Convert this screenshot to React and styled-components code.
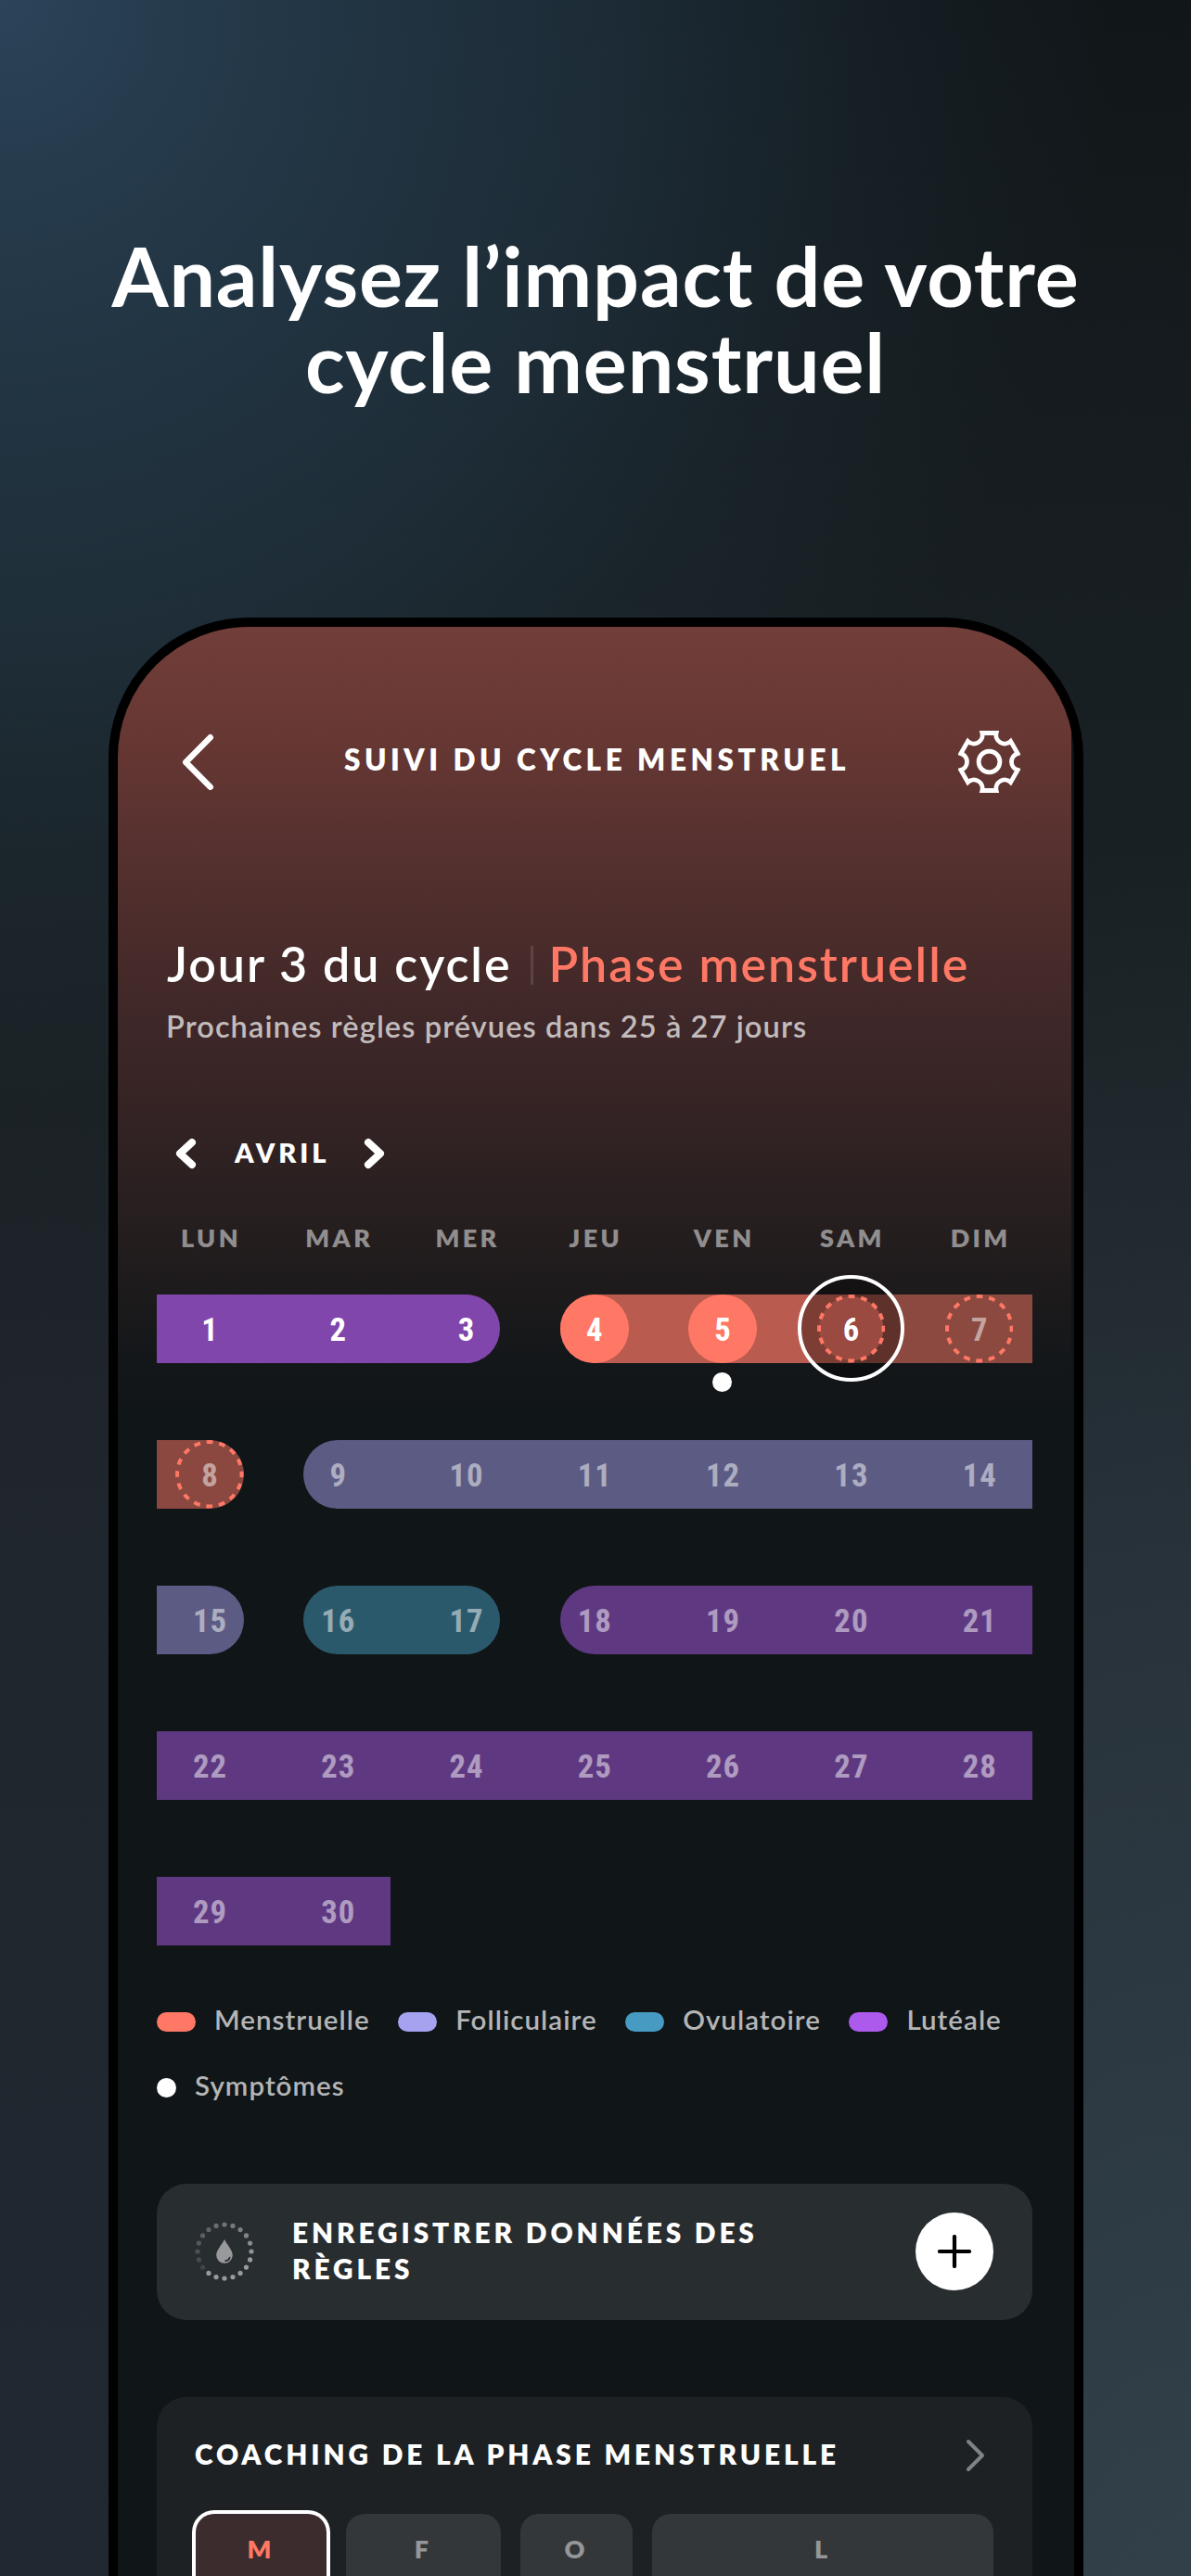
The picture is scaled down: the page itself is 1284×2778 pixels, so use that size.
import React from 'react';
import styled, { createGlobalStyle } from 'styled-components';

const GlobalStyle = createGlobalStyle`
  * {
    box-sizing: border-box;
  }
  body {
    margin: 0;
    background: #14191c;
    color: #fff;
    font-family: Lato, 'Open Sans', sans-serif;
  }
`;

const Page = styled.main`
  width: 1284px;
  height: 2778px;
  padding-top: 251px;
  overflow: hidden;
  background:
    radial-gradient(circle at 0 0, rgba(43, 68, 89, 1) 0, rgba(40, 64, 83, 0.8) 280px, rgba(36, 58, 74, 0.58) 660px, rgba(30, 48, 60, 0.32) 930px, rgba(24, 34, 38, 0) 1200px),
    radial-gradient(1100px 2000px at 100% 105%, #32424b 0, rgba(50, 66, 75, 0.55) 50%, rgba(50, 66, 75, 0) 100%),
    linear-gradient(180deg, #111619 0, #181f22 25%, #1b2226 42%, #20262d 60%, #222831 100%);
`;

const Headline = styled.h1`
  margin: 0 0 229px;
  font-size: 88px;
  font-weight: 700;
  line-height: 93px;
  letter-spacing: 0.85px;
  text-align: center;
  white-space: pre-line;
`;

const Phone = styled.section`
  width: 1051px;
  height: 2300px;
  margin-left: 117px;
  border: 10px solid #000;
  border-radius: 151px 151px 0 0;
  overflow: hidden;
  background:
    linear-gradient(180deg, #723e39 0, #663733 124px, #583230 224px, #482b2a 350px, #3e2728 430px, #372425 504px, #281f20 624px, #1c1a1b 724px, #14171a 790px, #101518 850px) no-repeat 0 0 / 1028px 850px,
    #101518;
`;

const Header = styled.header`
  display: flex;
  align-items: center;
  height: 67px;
  margin: 112px 58px 0 67px;
`;

const BackButton = styled.div`
  display: flex;
  width: 60px;
  padding-left: 3px;
`;

const HeaderTitle = styled.h2`
  flex: 1;
  margin: 0;
  padding-bottom: 5px;
  font-size: 31.5px;
  font-weight: 800;
  line-height: 40px;
  letter-spacing: 4.55px;
  text-align: center;
`;

const Status = styled.div`
  display: flex;
  height: 60px;
  margin: 154px 0 0 53px;
  font-size: 52px;
  font-weight: 600;
  line-height: 60px;
  letter-spacing: 1.95px;
  white-space: nowrap;
`;

const Separator = styled.div`
  width: 3px;
  height: 42px;
  margin: 11px 17px 0 20px;
  background: rgba(255, 255, 255, 0.12);
`;

const Phase = styled.span`
  color: #ff7865;
`;

const Forecast = styled.p`
  margin: 18px 0 0 52px;
  font-size: 32.6px;
  font-weight: 600;
  line-height: 40px;
  letter-spacing: 1.08px;
  color: rgba(255, 255, 255, 0.7);
`;

const MonthNav = styled.div`
  display: flex;
  align-items: center;
  gap: 42px;
  height: 40px;
  margin: 97px 0 0 63px;
`;

const Month = styled.span`
  margin-right: -4px;
  padding-bottom: 4px;
  font-size: 29px;
  font-weight: 800;
  letter-spacing: 3.9px;
`;

const Content = styled.div`
  width: 944px;
  margin-left: 42px;
`;

const Weekdays = styled.div`
  display: flex;
  gap: 64.7px;
  height: 34px;
  margin-top: 54px;
  padding: 0 20.2px;
`;

const Weekday = styled.span`
  display: flex;
  justify-content: center;
  width: 73.6px;
  padding-left: 3px;
  font-size: 27px;
  font-weight: 800;
  line-height: 34px;
  letter-spacing: 3.4px;
  color: rgba(255, 255, 255, 0.5);
`;

const Weeks = styled.div`
  display: grid;
  row-gap: 83.5px;
  margin-top: 44px;
`;

const Week = styled.div`
  display: flex;
  gap: 64.7px;
  height: 73.5px;
`;

const Segment = styled.div`
  display: flex;
  gap: 64.7px;
  padding: 0 ${(p) => (p.$roundRight ? 0 : 20.2)}px 0 ${(p) => (p.$roundLeft ? 0 : 20.2)}px;
  border-radius: ${(p) => {
    const l = p.$roundLeft ? '37px' : '0';
    const r = p.$roundRight ? '37px' : '0';
    return `${l} ${r} ${r} ${l}`;
  }};
  background: ${(p) => p.$fill};
`;

const Day = styled.div`
  position: relative;
  display: flex;
  align-items: center;
  justify-content: center;
  width: 73.6px;
  height: 73.5px;
  border-radius: 50%;
  background: ${(p) => (p.$logged ? '#ff7865' : 'transparent')};
`;

const DayNumber = styled.span`
  position: relative;
  padding: 2px 0 0 1px;
  font-family: Roboto, sans-serif;
  font-size: 34.7px;
  font-weight: 700;
  font-stretch: 75%;
  letter-spacing: 1px;
  color: ${(p) => (p.$past ? '#fff' : 'rgba(255, 255, 255, 0.5)')};
`;

const TodayRing = styled.div`
  position: absolute;
  top: -21px;
  left: -21px;
  width: 115px;
  height: 115px;
  border: 4px solid #fff;
  border-radius: 50%;
  background: rgba(0, 0, 0, 0.33);
`;

const PredictedRing = styled.svg`
  position: absolute;
  inset: 0;
`;

const SymptomDot = styled.span`
  position: absolute;
  top: 84px;
  left: 26px;
  width: 21px;
  height: 21px;
  border-radius: 50%;
  background: #fff;
`;

const Legend = styled.div`
  display: flex;
  flex-wrap: wrap;
  gap: 31px 30.5px;
  margin-top: 62.5px;
`;

const LegendItem = styled.div`
  display: flex;
  align-items: center;
  gap: 20px;
  height: 40px;
`;

const Swatch = styled.span`
  width: ${(p) => (p.$dot ? 21 : 42)}px;
  height: 21px;
  border-radius: 11px;
  background: ${(p) => p.$color};
`;

const LegendLabel = styled.span`
  padding-bottom: 4px;
  font-size: 29.5px;
  font-weight: 600;
  line-height: 36px;
  letter-spacing: 1.05px;
  color: rgba(255, 255, 255, 0.7);
`;

const LogCard = styled.div`
  display: flex;
  align-items: center;
  height: 146.5px;
  margin-top: 84px;
  padding: 0 42px 0 41px;
  border-radius: 32px;
  background: #282d30;
`;

const CardTitle = styled.h3`
  margin: 0;
  font-size: 29.8px;
  font-weight: 800;
  line-height: 39.5px;
  letter-spacing: 3.9px;
`;

const LogTitle = styled(CardTitle)`
  flex: 1;
  padding: 0 130px 2px 41px;
`;

const AddButton = styled.div`
  display: flex;
  align-items: center;
  justify-content: center;
  width: 84px;
  height: 84px;
  border-radius: 50%;
  background: #fff;
`;

const CoachingCard = styled.div`
  height: 300px;
  margin-top: 83.5px;
  padding-top: 43px;
  border-radius: 32px;
  background: #1d2124;
`;

const CoachingHeader = styled.div`
  display: flex;
  align-items: center;
  justify-content: space-between;
  height: 40px;
  padding: 0 52px 0 41px;

  ${CardTitle} {
    padding-bottom: 3px;
  }
`;

const PhaseTabs = styled.div`
  display: grid;
  grid-template-columns: 141px 167px 121px 368px;
  gap: 21px;
  margin: 42.5px 0 0 42px;
`;

const PhaseTab = styled.div`
  height: 150px;
  padding: 20px 4px 0 0;
  border-radius: 20px;
  font-size: 27px;
  font-weight: 800;
  line-height: 36px;
  text-align: center;
  color: ${(p) => (p.$active ? '#ff7865' : '#949698')};
  background: ${(p) => (p.$active ? '#3d2c2d' : '#34373a')};
  box-shadow: ${(p) => (p.$active ? '0 0 0 4px #fff' : 'none')};
`;

const Chevron = ({ w, h, stroke, color = '#fff', right = false }) => {
  const s = stroke / 2;
  const d = right
    ? `M${s} ${s}L${w - s} ${h / 2}L${s} ${h - s}`
    : `M${w - s} ${s}L${s} ${h / 2}L${w - s} ${h - s}`;
  return (
    <svg width={w} height={h} viewBox={`0 0 ${w} ${h}`} fill="none" overflow="visible">
      <path d={d} stroke={color} strokeWidth={stroke} strokeLinecap="round" strokeLinejoin="round" />
    </svg>
  );
};

const rotate = (x, y, deg) => {
  const a = (deg * Math.PI) / 180;
  return `${(x * Math.cos(a) - y * Math.sin(a)).toFixed(2)} ${(x * Math.sin(a) + y * Math.cos(a)).toFixed(2)}`;
};

// six flat teeth joined by concave arcs
const gearPath = [0, 60, 120, 180, 240, 300]
  .map((deg, i) => `${i ? 'A9.3 9.3 0 0 0' : 'M'} ${rotate(-7.6, -31, deg)} L${rotate(7.6, -31, deg)}`)
  .join(' ') + ` A9.3 9.3 0 0 0 ${rotate(-7.6, -31, 0)} Z`;

const GearIcon = () => (
  <svg width="67" height="67" viewBox="-33.5 -33.5 67 67" fill="none" stroke="#fff" strokeWidth="4.8">
    <path d={gearPath} />
    <circle r="11.4" />
  </svg>
);

const dots = Array.from({ length: 20 }, (_, i) => ({
  angle: ((216 - i * 18) * Math.PI) / 180,
  opacity: i < 7 ? 0.52 : 0.52 - (i - 6) * 0.031,
}));

const DropIcon = () => (
  <svg width="64" height="64" viewBox="-32 -32 64 64">
    {dots.map((d) => (
      <circle
        key={d.angle}
        cx={29 * Math.sin(d.angle)}
        cy={-29 * Math.cos(d.angle)}
        r="2.6"
        fill="#fff"
        opacity={d.opacity}
      />
    ))}
    <path d="M0 -13C2.6 -7.5 8.8 -1.5 8.8 4A8.8 8.8 0 0 1 -8.8 4C-8.8 -1.5 -2.6 -7.5 0 -13Z" fill="#97999b" />
    <path d="M1.2 10.2Q5 9.6 5.6 6.6" stroke="#282d30" strokeWidth="1.8" strokeLinecap="round" fill="none" />
  </svg>
);

const PlusIcon = () => (
  <svg width="36" height="36" viewBox="0 0 36 36" stroke="#000" strokeWidth="4.2" strokeLinecap="round">
    <path d="M18 2v32M2 18h32" />
  </svg>
);

const weekdays = ['LUN', 'MAR', 'MER', 'JEU', 'VEN', 'SAM', 'DIM'];

const MENSTRUAL = '#8a4840';
const FOLLICULAR = '#5c5b83';
const OVULATORY = '#2b596c';
const LUTEAL = '#5f3882';
const TODAY = 6;

const weeks = [
  [
    { from: 1, to: 3, fill: '#8146ab', right: true },
    { from: 4, to: 7, fill: 'linear-gradient(90deg, #ba5b4f 313px, #8c4940 313px)', left: true },
  ],
  [
    { from: 8, to: 8, fill: MENSTRUAL, right: true },
    { from: 9, to: 14, fill: FOLLICULAR, left: true },
  ],
  [
    { from: 15, to: 15, fill: FOLLICULAR, right: true },
    { from: 16, to: 17, fill: OVULATORY, left: true, right: true },
    { from: 18, to: 21, fill: LUTEAL, left: true },
  ],
  [{ from: 22, to: 28, fill: LUTEAL }],
  [{ from: 29, to: 30, fill: LUTEAL }],
];

const loggedDays = [4, 5];
const predictedDays = [6, 7, 8];
const symptomDays = [5];

const legend = [
  { label: 'Menstruelle', color: '#ff7865' },
  { label: 'Folliculaire', color: '#a5a2f0' },
  { label: 'Ovulatoire', color: '#479bc3' },
  { label: 'Lutéale', color: '#ab5aec' },
  { label: 'Symptômes', color: '#fff', dot: true },
];

const range = (from, to) => Array.from({ length: to - from + 1 }, (_, i) => from + i);

const CalendarDay = ({ day }) => (
  <Day $logged={loggedDays.includes(day)}>
    {day === TODAY && <TodayRing />}
    {predictedDays.includes(day) && (
      <PredictedRing width="73.6" height="73.5" viewBox="-36.8 -36.8 73.6 73.6">
        <circle
          r="34.8"
          fill={day === TODAY ? '#9a4a40' : 'none'}
          stroke="#ff7865"
          strokeWidth="4"
          strokeDasharray="6.83 6.836"
          strokeDashoffset="3.41"
        />
      </PredictedRing>
    )}
    <DayNumber $past={day <= TODAY}>{day}</DayNumber>
    {symptomDays.includes(day) && <SymptomDot />}
  </Day>
);

const App = () => {
  return (
    <>
      <GlobalStyle />
      <Page>
        <Headline>{'Analysez l’impact de votre\ncycle menstruel'}</Headline>
        <Phone>
          <Header>
            <BackButton>
              <Chevron w={33} h={60} stroke={6.5} />
            </BackButton>
            <HeaderTitle>SUIVI DU CYCLE MENSTRUEL</HeaderTitle>
            <GearIcon />
          </Header>

          <Status>
            <span>Jour 3 du cycle</span>
            <Separator />
            <Phase>Phase menstruelle</Phase>
          </Status>
          <Forecast>Prochaines règles prévues dans 25 à 27 jours</Forecast>

          <MonthNav>
            <Chevron w={21} h={32} stroke={8} />
            <Month>AVRIL</Month>
            <Chevron w={21} h={32} stroke={8} right />
          </MonthNav>

          <Content>
            <Weekdays>
              {weekdays.map((d) => (
                <Weekday key={d}>{d}</Weekday>
              ))}
            </Weekdays>

            <Weeks>
              {weeks.map((segments) => (
                <Week key={segments[0].from}>
                  {segments.map((s) => (
                    <Segment key={s.from} $fill={s.fill} $roundLeft={s.left} $roundRight={s.right}>
                      {range(s.from, s.to).map((day) => (
                        <CalendarDay key={day} day={day} />
                      ))}
                    </Segment>
                  ))}
                </Week>
              ))}
            </Weeks>

            <Legend>
              {legend.map((l) => (
                <LegendItem key={l.label}>
                  <Swatch $color={l.color} $dot={l.dot} />
                  <LegendLabel>{l.label}</LegendLabel>
                </LegendItem>
              ))}
            </Legend>

            <LogCard>
              <DropIcon />
              <LogTitle>ENREGISTRER DONNÉES DES RÈGLES</LogTitle>
              <AddButton>
                <PlusIcon />
              </AddButton>
            </LogCard>

            <CoachingCard>
              <CoachingHeader>
                <CardTitle>COACHING DE LA PHASE MENSTRUELLE</CardTitle>
                <Chevron w={19} h={34} stroke={4} color="#808385" right />
              </CoachingHeader>
              <PhaseTabs>
                <PhaseTab $active>M</PhaseTab>
                <PhaseTab>F</PhaseTab>
                <PhaseTab>O</PhaseTab>
                <PhaseTab>L</PhaseTab>
              </PhaseTabs>
            </CoachingCard>
          </Content>
        </Phone>
      </Page>
    </>
  );
};

export default App;
